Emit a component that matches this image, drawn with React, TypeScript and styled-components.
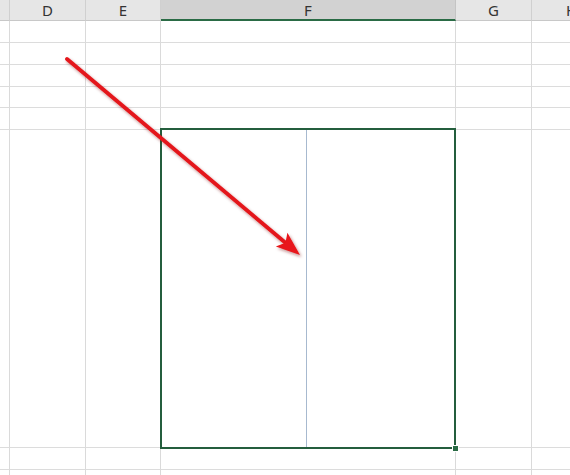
import React from "react";
import styled, { createGlobalStyle } from "styled-components";

const GlobalStyle = createGlobalStyle`
  html, body {
    margin: 0;
    padding: 0;
    background: #ffffff;
    overflow: hidden;
  }
`;

// column widths: sliver of C, then D, E, F, G, H
const colWidths = [10, 76, 75, 295, 76, 80];
const colNames = ["", "D", "E", "F", "G", "H"];
// row heights (incl. bottom grid line); row 6 is the tall merged row
const rowHeights = [22, 22, 22, 21, 22, 318, 22, 22];
const SELECTED_COL = 3;
const MERGED_ROW = 5;

const Sheet = styled.div`
  position: relative;
  width: 570px;
  height: 475px;
  overflow: hidden;
  display: grid;
  grid-template-columns: ${colWidths.map((w) => w + "px").join(" ")};
  grid-template-rows: 21px ${rowHeights.map((h) => h + "px").join(" ")};
  font-family: "Noto Sans", "Liberation Sans", sans-serif;
`;

const HeaderCell = styled.div<{ $active?: boolean }>`
  box-sizing: border-box;
  display: flex;
  align-items: center;
  justify-content: center;
  background: ${(p) => (p.$active ? "#d2d2d2" : "#e6e6e6")};
  border-right: 1px solid ${(p) => (p.$active ? "#c4c4c4" : "#d0d0d0")};
  border-bottom: ${(p) => (p.$active ? "2px solid #2a6b45" : "1px solid #c8c8c8")};
  color: #333333;
  font-size: 15px;
  line-height: 18px;
`;

const Cell = styled.div`
  box-sizing: border-box;
  border-right: 1px solid #dadada;
  border-bottom: 1px solid #dcdcdc;
  background: #ffffff;
`;

const MergedCell = styled.div`
  position: relative;
  box-sizing: border-box;
  display: flex;
  background: #ffffff;
  border-bottom: 1px solid #dcdcdc;
  border-right: 1px solid #dadada;

  /* selection frame */
  &::after {
    content: "";
    position: absolute;
    left: -1px;
    top: -2px;
    right: -1px;
    bottom: -2px;
    border: 2px solid #245e3d;
    pointer-events: none;
  }
`;

const SplitGuide = styled.div`
  width: 145px;
  flex: none;
  border-right: 1px solid #a7b9cf;
`;

const FillHandle = styled.div`
  position: absolute;
  right: -4px;
  bottom: -5px;
  width: 5px;
  height: 5px;
  background: #2a6b45;
  border: 1px solid #ffffff;
  z-index: 2;
`;

const Annotation = styled.svg`
  position: absolute;
  left: 0;
  top: 0;
  pointer-events: none;
`;

function Arrow() {
  const x1 = 67;
  const y1 = 59;
  const x2 = 300;
  const y2 = 255;
  const dx = x2 - x1;
  const dy = y2 - y1;
  const len = Math.sqrt(dx * dx + dy * dy);
  const ux = dx / len;
  const uy = dy / len;
  const headLen = 24;
  const headW = 9;
  const bx = x2 - ux * headLen;
  const by = y2 - uy * headLen;
  const notchX = x2 - ux * (headLen - 5);
  const notchY = y2 - uy * (headLen - 5);
  const head = [
    [x2, y2],
    [bx - uy * headW, by + ux * headW],
    [notchX, notchY],
    [bx + uy * headW, by - ux * headW],
  ]
    .map((pt) => pt.join(","))
    .join(" ");

  return (
    <Annotation width={570} height={475}>
      <defs>
        <filter id="soft" x="-20%" y="-20%" width="140%" height="140%">
          <feDropShadow dx="1.5" dy="2" stdDeviation="1.8" floodColor="#7a1a1a" floodOpacity="0.45" />
        </filter>
      </defs>
      <g filter="url(#soft)">
        <line
          x1={x1}
          y1={y1}
          x2={notchX}
          y2={notchY}
          stroke="#e4161a"
          strokeWidth={3.8}
          strokeLinecap="round"
        />
        <polygon points={head} fill="#e8151a" />
      </g>
    </Annotation>
  );
}

export default function App() {
  return (
    <>
      <GlobalStyle />
      <Sheet>
        {colNames.map((name, i) => (
          <HeaderCell key={"h" + i} $active={i === SELECTED_COL}>
            {name}
          </HeaderCell>
        ))}
        {rowHeights.map((_, r) =>
          colNames.map((_, c) =>
            r === MERGED_ROW && c === SELECTED_COL ? (
              <MergedCell key={r + "-" + c}>
                <SplitGuide />
                <FillHandle />
              </MergedCell>
            ) : (
              <Cell key={r + "-" + c} />
            )
          )
        )}
        <Arrow />
      </Sheet>
    </>
  );
}
